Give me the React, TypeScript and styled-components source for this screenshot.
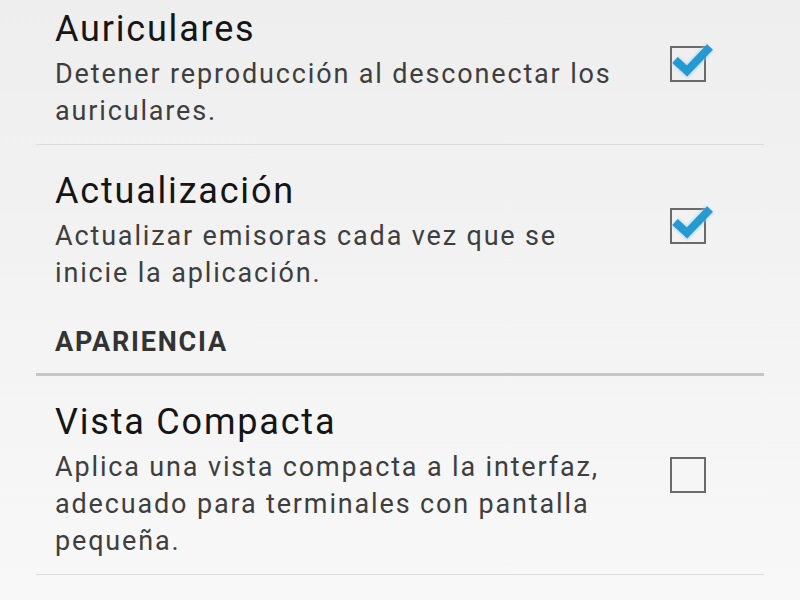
import React from 'react'
import styled, { createGlobalStyle } from 'styled-components'

type Pref = {
    title: string
    summary: string
    checked: boolean
    divider: boolean
}

const general: Pref[] = [
    {
        title: 'Auriculares',
        summary: 'Detener reproducción al desconectar los auriculares.',
        checked: true,
        divider: true,
    },
    {
        title: 'Actualización',
        summary: 'Actualizar emisoras cada vez que se inicie la aplicación.',
        checked: true,
        divider: false,
    },
]

const appearance: Pref[] = [
    {
        title: 'Vista Compacta',
        summary: 'Aplica una vista compacta a la interfaz, adecuado para terminales con pantalla pequeña.',
        checked: false,
        divider: true,
    },
]

const CheckBox: React.FC<{ checked: boolean }> = ({ checked }) => (
    <Box width="36" height="36" viewBox="0 0 36 36">
        <defs>
            <filter id="glow" x="-30%" y="-30%" width="160%" height="160%">
                <feGaussianBlur stdDeviation="1.2" />
            </filter>
        </defs>
        <rect x="1" y="1" width="34" height="34" fill="none" stroke="#6a6a6a" strokeWidth="2" />
        {checked && (
            <>
                <path d="M5 14 L17 25 L40 1" fill="none" stroke="#8fd3f0" strokeWidth="11" opacity="0.5" filter="url(#glow)" />
                <path d="M5 14 L17 25 L40 1" fill="none" stroke="#2699d3" strokeWidth="8" strokeLinejoin="miter" />
            </>
        )}
    </Box>
)

const Item: React.FC<{ pref: Pref }> = ({ pref }) => (
    <Row $divider={pref.divider}>
        <Texts>
            <Title>{pref.title}</Title>
            <Summary>{pref.summary}</Summary>
        </Texts>
        <CheckBox checked={pref.checked} />
    </Row>
)

const App: React.FC = () => {
    return (
        <>
            <GlobalStyle />
            <Screen>
                <List>
                    {general.map((p) => (
                        <Item key={p.title} pref={p} />
                    ))}
                    <Category>APARIENCIA</Category>
                    {appearance.map((p) => (
                        <Item key={p.title} pref={p} />
                    ))}
                </List>
            </Screen>
        </>
    )
}

export default App

const GlobalStyle = createGlobalStyle`
    html, body {
        margin: 0;
        padding: 0;
    }
    body {
        font-family: Roboto, "Noto Sans", sans-serif;
    }
`

const Screen = styled.div`
    width: 800px;
    height: 600px;
    overflow: hidden;
    background: linear-gradient(#eeeeee, #f8f8f8);
    padding: 0 36px;
    box-sizing: border-box;
`

const List = styled.div`
    display: flex;
    flex-direction: column;
    margin-top: -17px;
`

const Row = styled.div<{ $divider: boolean }>`
    display: flex;
    align-items: center;
    padding: 24px 58px 14px 19px;
    border-bottom: 1px solid ${(p) => (p.$divider ? '#dcdcdc' : 'transparent')};
`

const Texts = styled.div`
    flex: 1;
    display: flex;
    flex-direction: column;
    gap: 5px;
    padding-right: 40px;
`

const Title = styled.div`
    font-size: 36px;
    line-height: 44px;
    letter-spacing: 1.8px;
    color: #151515;
`

const Summary = styled.div`
    font-size: 27px;
    line-height: 37px;
    letter-spacing: 1.85px;
    color: #3e3e3e;
`

const Category = styled.div`
    font-size: 27px;
    font-weight: 700;
    line-height: 32px;
    letter-spacing: 1.8px;
    color: #333333;
    padding: 19px 19px 15px;
    border-bottom: 3px solid #c6c6c6;
`

const Box = styled.svg`
    flex: none;
    overflow: visible;
    margin-bottom: 10px;
`
